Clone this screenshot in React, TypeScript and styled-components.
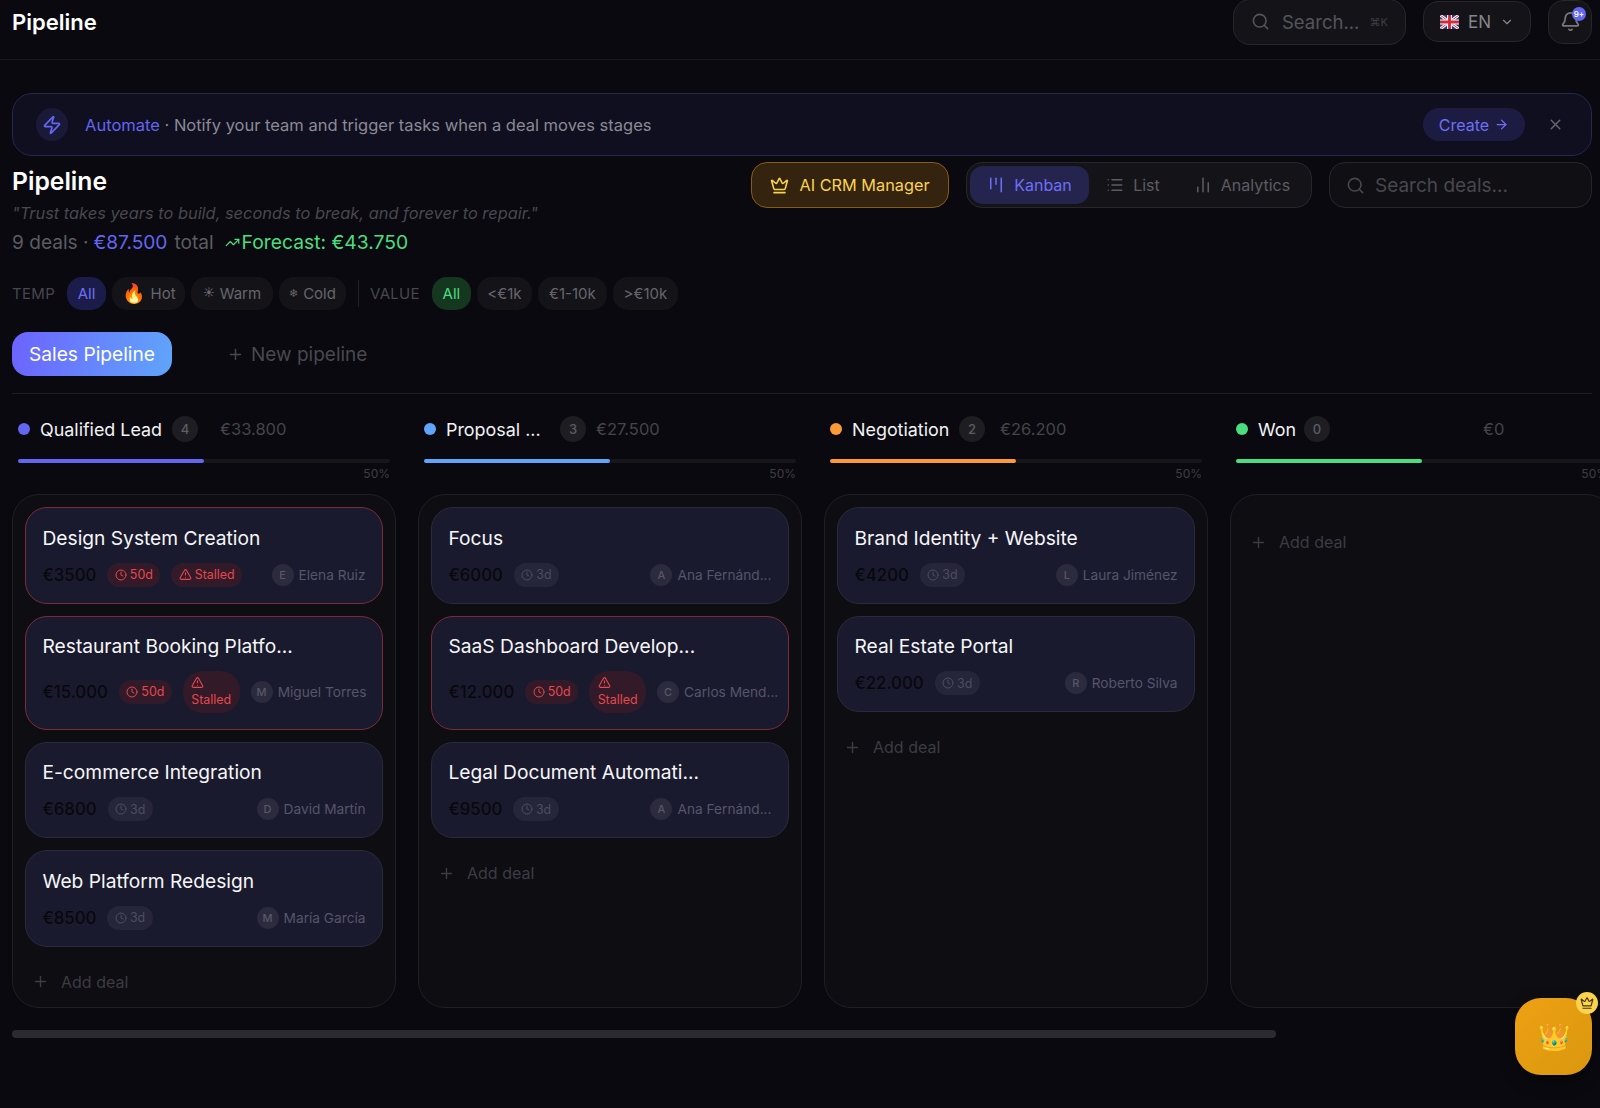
import styled, { createGlobalStyle } from "styled-components";
import {
  ArrowRight,
  Bell,
  ChartNoAxesColumn,
  ChevronDown,
  Clock,
  Crown,
  Kanban,
  List,
  Plus,
  Search,
  TrendingUp,
  TriangleAlert,
  X,
  Zap,
} from "lucide-react";

const GlobalStyle = createGlobalStyle`
  * { box-sizing: border-box; }
  html, body { margin: 0; height: 100%; background: #09090f; overflow: hidden; }
  body { font-family: Inter, "Liberation Sans", sans-serif; color: #fff; }
`;

const Page = styled.div`
  position: relative;
  width: 1600px;
  height: 1108px;
  overflow: hidden;
  background: #09090f;
`;

const TopBar = styled.header`
  height: 60px;
  padding: 0 8px 16px 12px;
  display: flex;
  align-items: center;
  gap: 17px;
  border-bottom: 1px solid #18181d;
`;

const TopTitle = styled.div`
  font-size: 22px;
  font-weight: 600;
  margin-right: auto;
`;

const TopSearch = styled.div`
  flex: none;
  width: 173px;
  height: 46px;
  padding: 0 17px 0 17px;
  display: flex;
  align-items: center;
  border: 1px solid #27272b;
  border-radius: 17px;
  background: #141418;
  color: #55555b;
  font-size: 18.5px;
  span { margin-left: 12px; }
  kbd {
    margin-left: auto;
    font: inherit;
    font-size: 11px;
    color: #3f3f45;
  }
`;

const LangButton = styled.div`
  flex: none;
  width: 108px;
  height: 41px;
  display: flex;
  align-items: center;
  justify-content: center;
  gap: 9px;
  border: 1px solid #27272b;
  border-radius: 15px;
  background: #141418;
  color: #85858b;
  font-size: 17px;
`;

const BellButton = styled.div`
  position: relative;
  flex: none;
  width: 44px;
  height: 44px;
  display: flex;
  align-items: center;
  justify-content: center;
  border: 1px solid #27272b;
  border-radius: 15px;
  background: #141418;
  color: #77777d;
`;

const BellBadge = styled.span`
  position: absolute;
  top: 6px;
  right: 5px;
  width: 14px;
  height: 14px;
  border-radius: 50%;
  background: #6366f1;
  color: #fff;
  font-size: 8px;
  font-weight: 600;
  line-height: 14px;
  text-align: center;
`;

const Content = styled.main`
  padding: 33px 8px 0 12px;
`;

const Banner = styled.section`
  height: 63px;
  padding: 0 27px 0 23px;
  display: flex;
  align-items: center;
  border: 1px solid #272750;
  border-radius: 20px;
  background: #0f0f20;
  font-size: 16.5px;
  color: #8a8a94;
`;

const BannerIcon = styled.div`
  width: 32px;
  height: 33px;
  margin-right: 17px;
  display: flex;
  align-items: center;
  justify-content: center;
  border-radius: 50%;
  background: #1a1a38;
  color: #6366f1;
`;

const BannerText = styled.div`
  margin-right: auto;
  b { font-weight: 400; color: #6366f1; }
`;

const CreateButton = styled.div`
  width: 102px;
  height: 33px;
  margin-right: 22px;
  display: flex;
  align-items: center;
  justify-content: center;
  gap: 5px;
  border-radius: 17px;
  background: #1c1c42;
  color: #6d6ff5;
  font-size: 16px;
  font-weight: 400;
`;

const CloseButton = styled.div`
  display: flex;
  color: #66666f;
`;

const TitleRow = styled.section`
  margin-top: 6px;
  display: flex;
  align-items: flex-start;
`;

const TitleBlock = styled.div`
  margin-right: auto;
`;

const PageTitle = styled.h1`
  margin: 0;
  font-size: 24.7px;
  font-weight: 600;
  line-height: 38px;
`;

const Quote = styled.p`
  margin: 3px 0 0;
  font-size: 16.4px;
  font-style: italic;
  line-height: 20px;
  color: #48484e;
`;

const Stats = styled.div`
  margin-top: 6px;
  display: flex;
  align-items: center;
  font-size: 19.1px;
  line-height: 26px;
  color: #5c5c62;
  b { margin: 0 7px 0 5px; font-weight: 400; color: #6366f1; }
`;

const Forecast = styled.span`
  margin-left: 11px;
  display: flex;
  align-items: center;
  gap: 2px;
  font-size: 19.3px;
  color: #4ade80;
`;

const Tools = styled.div`
  display: flex;
  gap: 17px;
`;

const ManagerButton = styled.div`
  width: 198px;
  height: 46px;
  display: flex;
  align-items: center;
  justify-content: center;
  gap: 10px;
  border: 1px solid #8a5a1a;
  border-radius: 16px;
  background: #33230f;
  color: #fcd34d;
  font-size: 16.3px;
  font-weight: 400;
`;

const ViewSwitch = styled.div`
  width: 346px;
  height: 46px;
  padding: 3px 4px 3px 3px;
  display: flex;
  border: 1px solid #27272b;
  border-radius: 16px;
  background: #141418;
`;

const ViewTab = styled.div<{ $active?: boolean; $width: number }>`
  width: ${(p) => p.$width}px;
  display: flex;
  align-items: center;
  justify-content: center;
  gap: 9px;
  border-radius: 13px;
  background: ${(p) => (p.$active ? "#24244f" : "transparent")};
  color: ${(p) => (p.$active ? "#6d6ff5" : "#5c5c62")};
  font-size: 16px;
  font-weight: 400;
`;

const DealSearch = styled.div`
  width: 263px;
  height: 46px;
  padding: 0 16px;
  display: flex;
  align-items: center;
  gap: 10px;
  border: 1px solid #27272b;
  border-radius: 16px;
  background: #101014;
  font-size: 19px;
  color: #47474d;
`;

const FilterRow = styled.div`
  margin-top: 22px;
  height: 33px;
  display: flex;
  align-items: center;
  gap: 6px;
`;

const FilterLabel = styled.span`
  margin-right: 6px;
  font-size: 15px;
  letter-spacing: 0.3px;
  color: #47474d;
`;

const Pill = styled.div<{ $active?: "blue" | "green"; $width: number }>`
  width: ${(p) => p.$width}px;
  height: 33px;
  display: flex;
  align-items: center;
  justify-content: center;
  gap: 5px;
  border-radius: 15px;
  font-size: 15px;
  font-weight: 400;
  white-space: nowrap;
  background: ${(p) =>
    p.$active === "blue" ? "#1c1c4a" : p.$active === "green" ? "#15371f" : "#141418"};
  color: ${(p) =>
    p.$active === "blue" ? "#6d6ff5" : p.$active === "green" ? "#4ade80" : "#66666c"};
`;

const PillGlyph = styled.span<{ $size: number }>`
  font-size: ${(p) => p.$size}px;
  line-height: 1;
`;

const FilterSep = styled.div`
  width: 1px;
  height: 27px;
  margin: 0 5px 0 6px;
  background: #212125;
`;

const PipelineTabs = styled.nav`
  margin-top: 22px;
  padding-bottom: 17px;
  display: flex;
  align-items: center;
  border-bottom: 1px solid #1d1d21;
`;

const ActivePipeline = styled.div`
  width: 160px;
  height: 44px;
  display: flex;
  align-items: center;
  justify-content: center;
  border-radius: 16px;
  background: linear-gradient(100deg, #6c63ff, #60a5fa);
  font-size: 19.2px;
  font-weight: 400;
`;

const NewPipeline = styled.div`
  margin-left: 55px;
  display: flex;
  align-items: center;
  gap: 7px;
  font-size: 19px;
  color: #48484e;
`;

const Board = styled.div`
  margin: 22px -8px 0 0;
  display: flex;
  gap: 22px;
  overflow: hidden;
`;

const Column = styled.section`
  flex: none;
  width: 384px;
`;

const ColumnHead = styled.div`
  height: 26px;
  padding-left: 6px;
  display: flex;
  align-items: center;
`;

const Dot = styled.span<{ $color: string }>`
  flex: none;
  width: 12px;
  height: 12px;
  margin-right: 10px;
  border-radius: 50%;
  background: ${(p) => p.$color};
`;

const ColumnName = styled.span<{ $width: number }>`
  width: ${(p) => p.$width}px;
  font-size: 17.9px;
  font-weight: 400;
  color: #f2f2f4;
  white-space: nowrap;
`;

const Count = styled.span`
  flex: none;
  width: 26px;
  height: 26px;
  border-radius: 50%;
  background: #1e1e22;
  color: #5c5c62;
  font-size: 13px;
  font-weight: 500;
  line-height: 26px;
  text-align: center;
`;

const Amount = styled.span<{ $left: number }>`
  margin-left: ${(p) => p.$left}px;
  font-size: 16.5px;
  color: #45454b;
`;

const Progress = styled.div`
  height: 4px;
  margin: 17px 6px 0;
  border-radius: 2px;
  background: #17171b;
`;

const ProgressFill = styled.div<{ $color: string }>`
  height: 100%;
  border-radius: 2px;
  background: ${(p) => p.$color};
`;

const Percent = styled.div`
  margin: 3px 6px 0 0;
  font-size: 12px;
  line-height: 16px;
  text-align: right;
  color: #3e3e44;
`;

const DealList = styled.div`
  height: 514px;
  margin-top: 12px;
  padding: 12px 12px 0;
  display: flex;
  flex-direction: column;
  gap: 12px;
  border: 1px solid #202024;
  border-radius: 27px;
  background: #0d0d12;
`;

const DealCard = styled.article<{ $stalled?: boolean }>`
  flex: none;
  padding: 16.5px 16.5px 16px;
  border: 1.5px solid ${(p) => (p.$stalled ? "#7c2c38" : "#2a2a3c")};
  border-radius: 22px;
  background: #1a1a2e;
`;

const DealTitle = styled.h3`
  margin: 0;
  font-size: 19.2px;
  font-weight: 400;
  line-height: 26px;
  white-space: nowrap;
  color: #f6f6f8;
`;

const DealRow = styled.div`
  margin-top: 12px;
  display: flex;
  align-items: center;
  gap: 11px;
  white-space: nowrap;
`;

const Price = styled.span`
  font-size: 16.8px;
  font-weight: 500;
  color: #08080c;
`;

const Chip = styled.span<{ $red?: boolean; $stacked?: boolean }>`
  flex: none;
  display: flex;
  flex-direction: ${(p) => (p.$stacked ? "column" : "row")};
  align-items: ${(p) => (p.$stacked ? "flex-start" : "center")};
  gap: 3px;
  padding: ${(p) => (p.$stacked ? "5.25px 8.5px" : "0 7.5px")};
  min-height: 24px;
  border-radius: ${(p) => (p.$stacked ? 20 : 12)}px;
  background: ${(p) => (p.$red ? "#331a28" : "#26263a")};
  color: ${(p) => (p.$red ? "#e5484d" : "#4d4d5e")};
  font-size: 12.4px;
  line-height: 15px;
  font-weight: 400;
`;

const Owner = styled.span`
  flex: none;
  margin-left: auto;
  display: flex;
  align-items: center;
  gap: 5px;
  font-size: 13.7px;
  color: #55556a;
`;

const Avatar = styled.span`
  width: 22px;
  height: 22px;
  border-radius: 50%;
  background: #2b2b3d;
  font-size: 11px;
  font-weight: 500;
  line-height: 22px;
  text-align: center;
  color: #575768;
`;

const AddDeal = styled.div<{ $empty?: boolean }>`
  flex: none;
  height: 46px;
  margin-top: ${(p) => (p.$empty ? 12 : 0)}px;
  padding-left: 7px;
  display: flex;
  align-items: center;
  gap: 12px;
  font-size: 16px;
  color: #3c3c42;
`;

const ScrollThumb = styled.div`
  width: 1264px;
  height: 8px;
  margin-top: 22px;
  border-radius: 4px;
  background: #2b2b2f;
`;

const Fab = styled.div`
  position: absolute;
  left: 1515px;
  top: 998px;
  width: 77px;
  height: 77px;
  display: flex;
  align-items: center;
  justify-content: center;
  border-radius: 26px;
  background: linear-gradient(135deg, #efa012, #d9980f);
  box-shadow: 0 6px 16px rgba(0, 0, 0, 0.4);
  font-size: 26px;
`;

const FabBadge = styled.span`
  position: absolute;
  top: -6px;
  right: -6px;
  width: 22px;
  height: 22px;
  display: flex;
  align-items: center;
  justify-content: center;
  border-radius: 50%;
  background: #fcd34d;
  color: #4a3608;
`;

const UkFlag = () => (
  <svg width="19" height="14" viewBox="0 0 20 14" preserveAspectRatio="none">
    <rect width="20" height="14" rx="2" fill="#27407f" />
    <path d="M0 0l20 14M20 0L0 14" stroke="#fff" strokeWidth="3" />
    <path d="M0 0l20 14M20 0L0 14" stroke="#cf2a3c" strokeWidth="1" />
    <path d="M10 0v14M0 7h20" stroke="#fff" strokeWidth="5" />
    <path d="M10 0v14M0 7h20" stroke="#cf2a3c" strokeWidth="3" />
  </svg>
);

type Deal = {
  title: string;
  price: string;
  days: string;
  stalled?: boolean;
  stacked?: boolean;
  initial: string;
  owner: string;
};

type Stage = {
  name: string;
  nameWidth: number;
  count: number;
  amount: string;
  amountLeft: number;
  color: string;
  deals: Deal[];
};

const stages: Stage[] = [
  {
    name: "Qualified Lead",
    nameWidth: 132,
    count: 4,
    amount: "€33.800",
    amountLeft: 22,
    color: "#6366f1",
    deals: [
      { title: "Design System Creation", price: "€3500", days: "50d", stalled: true, initial: "E", owner: "Elena Ruiz" },
      { title: "Restaurant Booking Platfo...", price: "€15.000", days: "50d", stalled: true, stacked: true, initial: "M", owner: "Miguel Torres" },
      { title: "E-commerce Integration", price: "€6800", days: "3d", initial: "D", owner: "David Martín" },
      { title: "Web Platform Redesign", price: "€8500", days: "3d", initial: "M", owner: "María García" },
    ],
  },
  {
    name: "Proposal ...",
    nameWidth: 114,
    count: 3,
    amount: "€27.500",
    amountLeft: 10,
    color: "#60a5fa",
    deals: [
      { title: "Focus", price: "€6000", days: "3d", initial: "A", owner: "Ana Fernánd..." },
      { title: "SaaS Dashboard Develop...", price: "€12.000", days: "50d", stalled: true, stacked: true, initial: "C", owner: "Carlos Mend..." },
      { title: "Legal Document Automati...", price: "€9500", days: "3d", initial: "A", owner: "Ana Fernánd..." },
    ],
  },
  {
    name: "Negotiation",
    nameWidth: 107,
    count: 2,
    amount: "€26.200",
    amountLeft: 15,
    color: "#fb9a37",
    deals: [
      { title: "Brand Identity + Website", price: "€4200", days: "3d", initial: "L", owner: "Laura Jiménez" },
      { title: "Real Estate Portal", price: "€22.000", days: "3d", initial: "R", owner: "Roberto Silva" },
    ],
  },
  {
    name: "Won",
    nameWidth: 46,
    count: 0,
    amount: "€0",
    amountLeft: 153,
    color: "#4ade80",
    deals: [],
  },
];

export default function App() {
  return (
    <Page>
      <GlobalStyle />
      <TopBar>
        <TopTitle>Pipeline</TopTitle>
        <TopSearch>
          <Search size={19} />
          <span>Search...</span>
          <kbd>⌘K</kbd>
        </TopSearch>
        <LangButton>
          <UkFlag />
          EN
          <ChevronDown size={14} />
        </LangButton>
        <BellButton>
          <Bell size={21} />
          <BellBadge>9+</BellBadge>
        </BellButton>
      </TopBar>

      <Content>
        <Banner>
          <BannerIcon>
            <Zap size={20} />
          </BannerIcon>
          <BannerText>
            <b>Automate</b> · Notify your team and trigger tasks when a deal moves stages
          </BannerText>
          <CreateButton>
            Create <ArrowRight size={15} />
          </CreateButton>
          <CloseButton>
            <X size={17} />
          </CloseButton>
        </Banner>

        <TitleRow>
          <TitleBlock>
            <PageTitle>Pipeline</PageTitle>
            <Quote>"Trust takes years to build, seconds to break, and forever to repair."</Quote>
            <Stats>
              9 deals ·<b>€87.500</b> total
              <Forecast>
                <TrendingUp size={15} />
                Forecast: €43.750
              </Forecast>
            </Stats>
          </TitleBlock>
          <Tools>
            <ManagerButton>
              <Crown size={19} />
              AI CRM Manager
            </ManagerButton>
            <ViewSwitch>
              <ViewTab $active $width={119}>
                <Kanban size={18} />
                Kanban
              </ViewTab>
              <ViewTab $width={88}>
                <List size={18} />
                List
              </ViewTab>
              <ViewTab $width={130}>
                <ChartNoAxesColumn size={18} />
                Analytics
              </ViewTab>
            </ViewSwitch>
            <DealSearch>
              <Search size={19} />
              Search deals...
            </DealSearch>
          </Tools>
        </TitleRow>

        <FilterRow>
          <FilterLabel>TEMP</FilterLabel>
          <Pill $active="blue" $width={39}>All</Pill>
          <Pill $width={73}>
            <PillGlyph $size={19}>🔥</PillGlyph>
            Hot
          </Pill>
          <Pill $width={82}>
            <PillGlyph $size={11}>☀</PillGlyph>
            Warm
          </Pill>
          <Pill $width={67}>
            <PillGlyph $size={11}>❄</PillGlyph>
            Cold
          </Pill>
          <FilterSep />
          <FilterLabel>VALUE</FilterLabel>
          <Pill $active="green" $width={39}>All</Pill>
          <Pill $width={55}>&lt;€1k</Pill>
          <Pill $width={69}>€1-10k</Pill>
          <Pill $width={65}>&gt;€10k</Pill>
        </FilterRow>

        <PipelineTabs>
          <ActivePipeline>Sales Pipeline</ActivePipeline>
          <NewPipeline>
            <Plus size={17} />
            New pipeline
          </NewPipeline>
        </PipelineTabs>

        <Board>
          {stages.map((stage) => (
            <Column key={stage.name}>
              <ColumnHead>
                <Dot $color={stage.color} />
                <ColumnName $width={stage.nameWidth}>{stage.name}</ColumnName>
                <Count>{stage.count}</Count>
                <Amount $left={stage.amountLeft}>{stage.amount}</Amount>
              </ColumnHead>
              <Progress>
                <ProgressFill $color={stage.color} style={{ width: "50%" }} />
              </Progress>
              <Percent>50%</Percent>
              <DealList>
                {stage.deals.map((deal) => (
                  <DealCard key={deal.title} $stalled={deal.stalled}>
                    <DealTitle>{deal.title}</DealTitle>
                    <DealRow>
                      <Price>{deal.price}</Price>
                      <Chip $red={deal.stalled}>
                        <Clock size={12} />
                        {deal.days}
                      </Chip>
                      {deal.stalled && (
                        <Chip $red $stacked={deal.stacked}>
                          <TriangleAlert size={13} />
                          Stalled
                        </Chip>
                      )}
                      <Owner>
                        <Avatar>{deal.initial}</Avatar>
                        {deal.owner}
                      </Owner>
                    </DealRow>
                  </DealCard>
                ))}
                <AddDeal $empty={stage.deals.length === 0}>
                  <Plus size={17} />
                  Add deal
                </AddDeal>
              </DealList>
            </Column>
          ))}
        </Board>

        <ScrollThumb />
      </Content>

      <Fab>
        👑
        <FabBadge>
          <Crown size={14} />
        </FabBadge>
      </Fab>
    </Page>
  );
}
